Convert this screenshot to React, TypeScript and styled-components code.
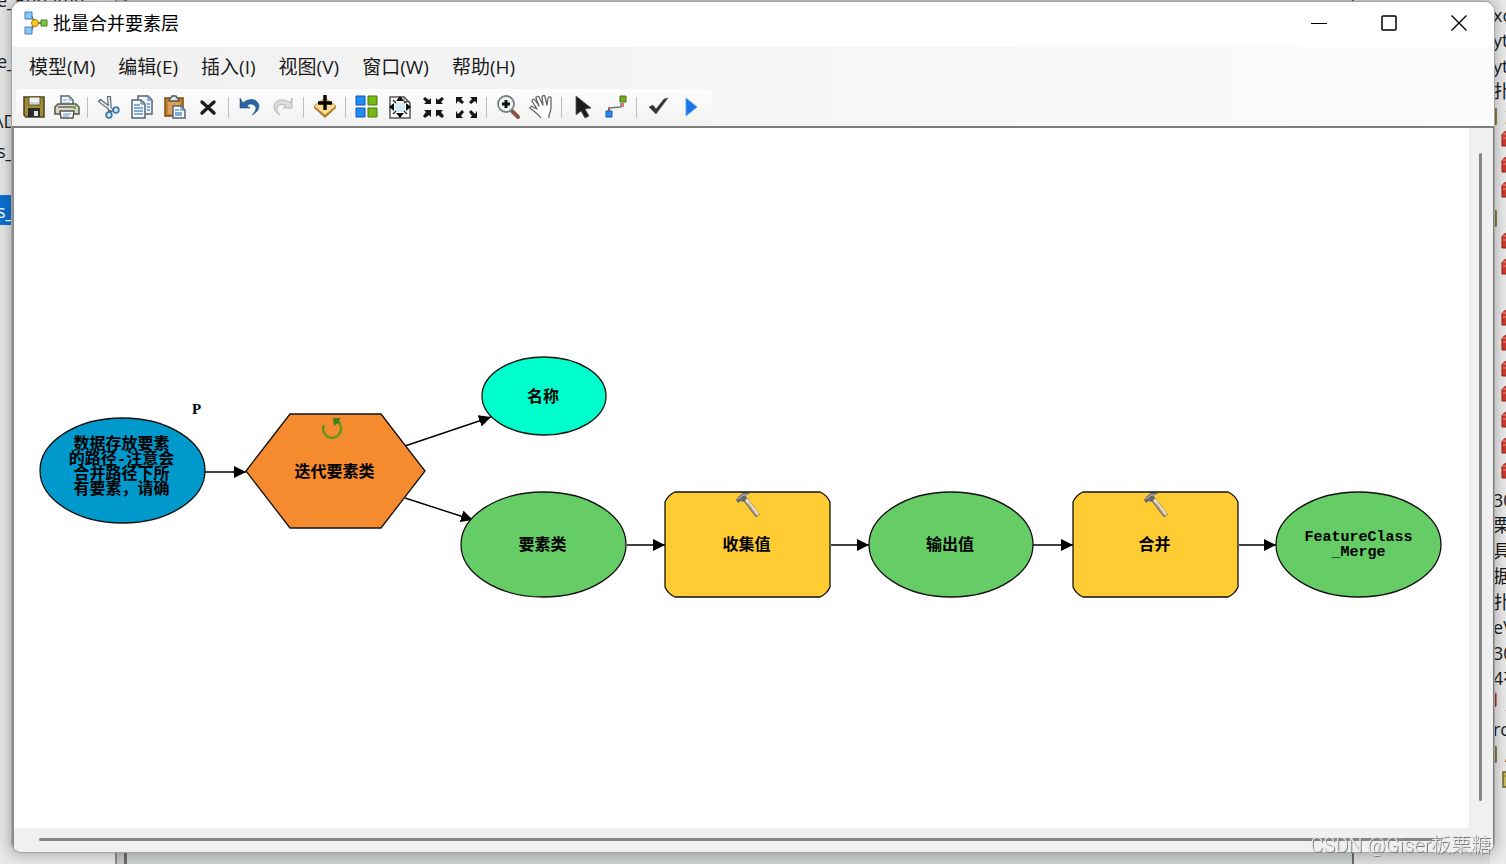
import React from "react";
import styled, { createGlobalStyle } from "styled-components";

const UI_FONT = `"Open Sans", "Noto Sans CJK SC", sans-serif`;

const GlobalStyle = createGlobalStyle`
  * { box-sizing: border-box; }
  body { margin: 0; overflow: hidden; font-family: ${UI_FONT}; color: #1a1a1a; }
  button { font: inherit; color: inherit; border: 0; background: none; padding: 0; margin: 0; }
  ul { list-style: none; margin: 0; padding: 0; }
`;

/* ---------- desktop behind the window ---------- */

const Desktop = styled.div`
  display: grid;
  grid-template-columns: 12px minmax(0, 1fr) 12px;
  grid-template-rows: 2px minmax(0, 1fr) 12px;
  height: 100vh;
  overflow: hidden;
`;

const Backdrop = styled.div`
  grid-area: 1 / 1 / -1 / -1;
  display: flex;
  min-height: 0;
  overflow: hidden;
  background: #cdd1d0;
`;

const FilePane = styled.ul`
  width: 117px;
  flex: none;
  background: #e6e6e6;
  border-right: 2px solid #8a8a90;
  overflow: hidden;
`;

const FileRow = styled.li<{ $selected?: boolean }>`
  height: 30px;
  padding-top: 3px;
  line-height: 27px;
  font-size: 18px;
  text-indent: -3px;
  white-space: nowrap;
  background: ${(p) => (p.$selected ? "#0a72d0" : "transparent")};
  color: ${(p) => (p.$selected ? "#fff" : "#222")};
  &:first-child { height: 15px; padding: 0; line-height: 1px; }
`;

const Splitter = styled.div`
  width: 10px;
  flex: none;
  background: #c4c4c8;
  border-right: 3px solid #6a6a6a;
`;

const MapPane = styled.div`
  flex: 1;
`;

const CatalogPane = styled.div`
  width: 154px;
  flex: none;
  background: #dedede;
  border-left: 2px solid #6a6a6a;
`;

const CatalogList = styled.ul`
  grid-area: 1 / 3 / -1 / 4;
  display: flex;
  flex-direction: column;
  min-height: 0;
  margin-left: -4px;
  padding: 2px 0 71px;
  overflow: hidden;
  background: #eaeaea;
`;

const CatalogRow = styled.li<{ $indent: number }>`
  flex: 1;
  display: flex;
  align-items: center;
  gap: 8px;
  min-height: 0;
  padding-left: ${(p) => p.$indent}px;
  font-size: 18px;
  line-height: 24px;
  white-space: nowrap;
  svg { flex: none; }
`;

type CatalogKind = "text" | "folder" | "data" | "dataEdge" | "folderEdge" | "blank";

const indents: Record<CatalogKind, number> = {
  text: 3, blank: 3, folder: 12, data: 11, dataEdge: 0, folderEdge: 0,
};

const catalog: [CatalogKind, string?][] = [
  ["text", "xc"], ["text", "yth"], ["text", "yth"], ["text", "扑"],
  ["folderEdge", "Z"], ["data"], ["data"], ["data"],
  ["folderEdge", "三"], ["data"], ["data"], ["blank"],
  ["data"], ["data"], ["data"], ["data"], ["data"], ["data"], ["data"],
  ["text", "30"], ["text", "栗"], ["text", "具"], ["text", "据"], ["text", "扑"],
  ["text", "e\\"], ["text", "30"], ["text", "4在"],
  ["dataEdge", "工"], ["text", "rcg"], ["folderEdge", "A"], ["folder"],
];

const DatabaseIcon = ({ width = 14 }: { width?: number }) => (
  <svg width={width} height="24" viewBox={`${14 - width} 0 ${width} 24`} aria-hidden="true">
    <path d="M1 4 5 1h8v13l-4 2H1z" fill="#d0392d" stroke="#8d2119" />
    <path d="M1 4h8l4-3M2 8h7" fill="none" stroke="#e8786c" strokeWidth="1.5" />
  </svg>
);

const FolderIcon = ({ width = 14 }: { width?: number }) => (
  <svg width={width} height="18" viewBox={`${14 - width} 0 ${width} 18`} aria-hidden="true">
    <path d="M1 1h12v15H1z" fill="#c8bb62" stroke="#6d6424" strokeWidth="1.5" />
    <path d="M1 5h9V2" fill="none" stroke="#8a7f38" />
  </svg>
);

/* ---------- window ---------- */

const Window = styled.section`
  grid-area: 2 / 2 / 3 / 3;
  display: flex;
  flex-direction: column;
  min-height: 0;
  z-index: 1;
  overflow: hidden;
  background: #f0f0f0;
  border-radius: 9px;
  box-shadow: 0 0 0 1px #a4a4a4, 0 0 14px 2px rgba(0, 0, 0, 0.28);
`;

const TitleBar = styled.header`
  display: flex;
  align-items: center;
  flex: none;
  height: 45px;
  padding: 0 0 3px 12px;
  background: #fff;
`;

const Title = styled.h1`
  flex: 1;
  margin: 0 0 0 5px;
  font-size: 18px;
  line-height: 24px;
  font-weight: 400;
  color: #000;
`;

const WindowButton = styled.button`
  display: grid;
  place-items: center;
  width: 70px;
  height: 42px;
`;

const CommandArea = styled.div`
  flex: none;
  background: linear-gradient(90deg, #f0f0f0, #fbfbfb);
`;

const MenuBar = styled.nav`
  display: flex;
  align-items: center;
  gap: 23px;
  height: 42px;
  padding: 0 0 2px 17px;
`;

const MenuButton = styled.button`
  font-size: 19px;
  line-height: 24px;
  white-space: nowrap;
`;

const ToolBar = styled.div`
  display: flex;
  align-items: center;
  width: max-content;
  height: 37px;
  margin-left: 4px;
  padding: 0 5px 1px 1px;
  border-radius: 4px;
  background: linear-gradient(#fdfdfd, #f1f1f1);
`;

const ToolButton = styled.button`
  display: grid;
  place-items: center;
  width: 33px;
  height: 34px;
`;

const ToolSeparator = styled.span`
  width: 1px;
  height: 21px;
  margin: 0 4px;
  background: #bdbdbd;
`;

const Workspace = styled.main`
  flex: 1;
  display: grid;
  grid-template-columns: minmax(0, 1fr) 24px;
  grid-template-rows: minmax(0, 1fr) 24px;
  min-height: 0;
  border: solid #7d7d7d;
  border-width: 2px 1px 0 2px;
  border-left-color: #8c8c8c;
`;

const Canvas = styled.div`
  position: relative;
  overflow: hidden;
  background: #fff;
  border-bottom-right-radius: 3px;
`;

const VerticalScroll = styled.div`
  padding: 25px 0 27px 10px;
  &::before { content: ""; display: block; width: 3px; height: 100%; background: #868686; border-radius: 2px; }
`;

const HorizontalScroll = styled.div`
  padding: 10px 27px 0 25px;
  &::before { content: ""; display: block; height: 3px; background: #868686; border-radius: 2px; }
`;

const Watermark = styled.span`
  position: fixed;
  right: 15px;
  bottom: 6px;
  z-index: 2;
  font-family: Roboto, "Noto Sans CJK SC", sans-serif;
  font-size: 20px;
  line-height: 26px;
  font-weight: 300;
  color: #e6e6e6;
  text-shadow: 1px 1px 0 #7c7c7c;
  white-space: nowrap;
`;

/* ---------- diagram ---------- */

const Edges = styled.svg`
  position: absolute;
  inset: 0;
  width: 100%;
  height: 100%;
`;

const NodeBox = styled.div<{ $x: number; $y: number; $w: number; $h: number }>`
  position: absolute;
  left: ${(p) => p.$x}px;
  top: ${(p) => p.$y}px;
  width: ${(p) => p.$w}px;
  height: ${(p) => p.$h}px;
  display: grid;
  place-items: center;
  > * { grid-area: 1 / 1; }
`;

const NodeLabel = styled.span<{ $raised?: boolean }>`
  z-index: 1;
  padding: ${(p) => (p.$raised ? "0 2px 6px 0" : "4px 2px 0 0")};
  font-family: "Liberation Mono", "Noto Sans CJK SC", monospace;
  font-size: 16px;
  line-height: 15px;
  font-weight: 700;
  text-align: center;
  white-space: pre;
  color: #000;
`;

const LatinLabel = styled(NodeLabel)`
  padding: 0;
  font-size: 15px;
`;

const NodeBadge = styled.span`
  z-index: 1;
  align-self: start;
  height: 28px;
`;

const ParameterMark = styled.span`
  position: absolute;
  left: 178px;
  top: 273px;
  font-family: "Liberation Serif", serif;
  font-size: 15px;
  line-height: 17px;
  font-weight: 700;
  color: #000;
`;

type Shape = "ellipse" | "hexagon" | "process";

interface DiagramNode {
  x: number; y: number; w: number; h: number;
  shape: Shape; fill: string; label: string;
  badge?: "loop" | "hammer"; raised?: boolean; latin?: boolean;
}

const nodes: DiagramNode[] = [
  { x: 25, y: 289, w: 167, h: 107, shape: "ellipse", fill: "#0099cc", label: "数据存放要素\n的路径-注意会\n合并路径下所\n有要素，请确", raised: true },
  { x: 231, y: 285, w: 181, h: 116, shape: "hexagon", fill: "#f68a2e", label: "迭代要素类", badge: "loop" },
  { x: 467, y: 228, w: 126, h: 80, shape: "ellipse", fill: "#00ffcc", label: "名称" },
  { x: 446, y: 363, w: 167, h: 107, shape: "ellipse", fill: "#66cc66", label: "要素类" },
  { x: 650, y: 363, w: 167, h: 107, shape: "process", fill: "#ffcc33", label: "收集值", badge: "hammer" },
  { x: 854, y: 363, w: 166, h: 107, shape: "ellipse", fill: "#66cc66", label: "输出值" },
  { x: 1058, y: 363, w: 167, h: 107, shape: "process", fill: "#ffcc33", label: "合并", badge: "hammer" },
  { x: 1261, y: 363, w: 167, h: 107, shape: "ellipse", fill: "#66cc66", label: "FeatureClass\n_Merge", latin: true },
];

const edges: [number, number, number, number][] = [
  [191, 344, 232, 344],
  [391, 318, 477, 289],
  [391, 370, 459, 392],
  [613, 417, 651, 417],
  [817, 417, 855, 417],
  [1019, 417, 1059, 417],
  [1225, 417, 1262, 417],
];

const NodeShape = ({ shape, w, h, fill }: { shape: Shape; w: number; h: number; fill: string }) => {
  const common = { fill, stroke: "#111", strokeWidth: 1.3 };
  return (
    <svg width={w} height={h} aria-hidden="true">
      {shape === "ellipse" && <ellipse cx={w / 2} cy={h / 2} rx={w / 2 - 1} ry={h / 2 - 1} {...common} />}
      {shape === "hexagon" && (
        <polygon points={`1,${h / 2} 45,1 ${w - 45},1 ${w - 1},${h / 2} ${w - 45},${h - 1} 45,${h - 1}`} {...common} />
      )}
      {shape === "process" && (
        <path
          d={`M1 11Q4 4 11 1H${w - 11}Q${w - 4} 4 ${w - 1} 11V${h - 11}Q${w - 4} ${h - 4} ${w - 11} ${h - 1}H11Q4 ${h - 4} 1 ${h - 11}Z`}
          {...common}
        />
      )}
    </svg>
  );
};

const LoopBadge = () => (
  <svg width="28" height="28" viewBox="0 0 28 28" aria-hidden="true">
    <path d="M2 12a9 9 0 1 0 14-3" fill="none" stroke="#5b9a1c" strokeWidth="2.4" />
    <path d="M11 5h8l-2 2 2 4-3-1-4 3z" fill="#3d7f1a" />
  </svg>
);

const HammerBadge = () => (
  <svg width="28" height="28" viewBox="0 0 28 28" aria-hidden="true">
    <path d="M11 8 24 25" stroke="#80735b" strokeWidth="5" />
    <path d="M11 7 24 24" stroke="#e9e2d3" strokeWidth="3" />
    <path d="m14 12 9 12" stroke="#b3a78f" strokeWidth="1" />
    <path d="m2 9 3-4 4-3h7l-4 3 1 3-4 3-2-1-3 2z" fill="#68686c" />
    <path d="m4 8 5-4h5" stroke="#c9c9cd" fill="none" />
  </svg>
);

/* ---------- toolbar icons ---------- */

const Icon = ({ children }: { children: React.ReactNode }) => (
  <svg width="26" height="26" viewBox="0 0 26 26" fill="none" aria-hidden="true">{children}</svg>
);

const SaveIcon = () => (
  <Icon>
    <path d="M3 3h20v20H5l-2-2z" fill="#a08c38" stroke="#4b411a" strokeWidth="1.5" />
    <path d="M8 3h11v8H8z" fill="#f1f3f6" stroke="#5d5222" />
    <path d="M9 9h9" stroke="#a9b3c0" />
    <path d="M7 14h12v9H7z" fill="#2c2c2e" />
    <path d="M13 17h4v5h-4z" fill="#e4e4e4" />
  </Icon>
);

const PrintIcon = () => (
  <Icon>
    <path d="M7 11V2h8l4 4v5" fill="#f7fafd" stroke="#5b6570" strokeWidth="1.5" />
    <path d="M15 2v4h4M9 6h4M9 9h7" stroke="#6fa0cf" />
    <path d="M4 10h18l3 3v7H1v-7z" fill="#d9d8c2" stroke="#55554d" strokeWidth="1.5" />
    <path d="M4 13h18" stroke="#888679" strokeWidth="2" />
    <path d="M6 17h14l-1 7H7z" fill="#fff" stroke="#555" strokeWidth="1.5" />
    <path d="M9 20h8M9 22h6" stroke="#4b8fd2" />
    <path d="M19 14h3" stroke="#63b51d" strokeWidth="2" />
  </Icon>
);

const CutIcon = () => (
  <Icon>
    <path d="m3 6 14 11M13 2l1 16" stroke="#5c6269" strokeWidth="4" />
    <path d="m4 7 12 9M13 3l1 13" stroke="#e6e8ea" strokeWidth="1.8" />
    <circle cx="20" cy="16" r="2.8" fill="#d8ebf6" stroke="#3d7ea9" strokeWidth="1.8" />
    <circle cx="13" cy="21" r="2.8" fill="#d8ebf6" stroke="#3d7ea9" strokeWidth="1.8" />
  </Icon>
);

const CopyIcon = () => (
  <Icon>
    <path d="M9 2h10l4 4v14H9z" fill="#eef4fa" stroke="#59636e" strokeWidth="1.5" />
    <path d="M19 2v4h4M18 10h3M18 13h3M18 16h3" stroke="#5494cc" strokeWidth="1.3" />
    <path d="M3 6h9l4 4v14H3z" fill="#f8fbfe" stroke="#59636e" strokeWidth="1.5" />
    <path d="M12 6v4h4" stroke="#59636e" />
    <path d="M5 11h6M5 14h9M5 17h9M5 20h9" stroke="#5494cc" strokeWidth="1.3" />
  </Icon>
);

const PasteIcon = () => (
  <Icon>
    <path d="M3 4h18v18H3z" fill="#c5802f" stroke="#7d4c16" strokeWidth="1.5" />
    <path d="M6 7h12v13H6z" fill="#dba05a" />
    <path d="M7 7c0-3 2-2 3-5h4c1 3 3 2 3 5z" fill="#e4e7ea" stroke="#555" strokeWidth="1.3" />
    <path d="M11 12h8l4 4v8H11z" fill="#f8fbfe" stroke="#59636e" strokeWidth="1.5" />
    <path d="M19 12v4h4M13 16h4M13 19h7M13 21h7" stroke="#5494cc" strokeWidth="1.3" />
  </Icon>
);

const DeleteIcon = () => (
  <Icon>
    <path d="m7 8 12 11M19 8 7 19" stroke="#1d1d1d" strokeWidth="3.4" strokeLinecap="round" />
  </Icon>
);

const UndoIcon = () => (
  <Icon>
    <path d="M6 9c5-5 15-5 16 3 0 4-3 7-7 9 4-4 5-7 3-9-3-3-7-2-8 0l3 2H3V4z" fill="#2a66a0" stroke="#1d4f83" strokeWidth=".6" />
  </Icon>
);

const RedoIcon = () => (
  <Icon>
    <path d="M20 9C15 4 5 5 4 12c0 4 2 7 6 9-3-4-4-6-2-9 2-2 6-2 8 0l-3 2h9V4z" fill="#dcdcdc" stroke="#b8b8b8" />
  </Icon>
);

const AddDataIcon = () => (
  <Icon>
    <path d="m2 14 11 10 11-10v-2L13 5 2 12z" fill="#a97929" />
    <path d="m2 12 11-8 11 8-11 9z" fill="#ffdc91" stroke="#c79b4b" />
    <path d="M13 1v15M6 9h14" stroke="#000" strokeWidth="3.4" />
  </Icon>
);

const LayoutIcon = () => (
  <Icon>
    <path d="M2 2h9v9H2zM2 14h9v9H2z" fill="#208cf5" stroke="#1257b8" />
    <path d="M14 2h9v9h-9zM14 14h9v9h-9z" fill="#79b916" stroke="#44780b" />
  </Icon>
);

const FullExtentIcon = () => (
  <Icon>
    <path d="M3 3h14l6 6v15H3z" fill="#fff" stroke="#555" strokeWidth="1.5" />
    <path d="M17 3v5h6" stroke="#555" />
    <path d="M8 9h10v9H8z" fill="#d5e9f7" />
    <path d="m13 2 4 5H9zM13 24l4-5H9zM2 13l5-4v8zM24 13l-5-4v8z" fill="#0b0b0b" />
    <path d="m6 6 3 3M20 20l-3-3M20 7l-3 2M6 20l3-3" stroke="#333" strokeWidth="1.5" />
  </Icon>
);

const ShrinkIcon = () => (
  <Icon>
    <path d="M11 10V4L9 6 5 3 3 5l3 3-2 2zM16 10V4l2 2 4-3 2 2-3 3 2 2zM11 16v7l-2-2-4 3-2-2 3-4-2-2zM16 16v7l2-2 4 3 2-2-3-4 2-2z" fill="#161616" />
  </Icon>
);

const ExpandIcon = () => (
  <Icon>
    <path d="M3 3h7L8 5l3 3-2 2-4-3-2 3zM24 3h-7l2 2-3 3 2 2 4-3 2 3zM3 24h7l-2-2 3-4-2-2-4 4-2-3zM24 24h-7l2-2-3-4 2-2 4 4 2-3z" fill="#161616" />
  </Icon>
);

const ZoomIcon = () => (
  <Icon>
    <path d="m17 17 6 6" stroke="#8a5242" strokeWidth="4" strokeLinecap="round" />
    <circle cx="11" cy="10" r="8" fill="#eef3f6" stroke="#7c7f82" strokeWidth="1.8" />
    <path d="M11 6v8M7 10h8" stroke="#111" strokeWidth="3" />
  </Icon>
);

const PanIcon = () => (
  <Icon>
    <path
      d="M13 24c-2-3-4-4-6-6l-5-4c0-2 2-2 3-1l4 2-5-8c0-2 2-2 3-1l4 6-3-8c0-2 2-2 3-1l4 8-1-8c1-2 3-2 3 0l2 8 1-7c1-2 3-1 3 0v9c0 4-1 5-2 8v3"
      fill="#fff" stroke="#676767" strokeWidth="1.3" strokeLinejoin="round"
    />
  </Icon>
);

const PointerIcon = () => (
  <Icon>
    <path d="M6 2v19l5-4 4 7 4-2-4-7 6-1z" fill="#1c1c1e" stroke="#555" strokeWidth=".8" />
  </Icon>
);

const ConnectIcon = () => (
  <Icon>
    <path d="M6 17v-3l12-1V9" stroke="#777" strokeWidth="1.6" />
    <path d="M6 14v3M20 9v4" stroke="#e03030" strokeWidth="1.4" />
    <path d="M3 17h6v6H3z" fill="#238bef" stroke="#1357aa" />
    <path d="M17 2h6v6h-6z" fill="#75ad18" stroke="#44700b" />
  </Icon>
);

const ValidateIcon = () => (
  <Icon>
    <path d="m4 13 4-2 3 4 8-10 4-1-12 16z" fill="#333" stroke="#555" strokeWidth=".6" />
  </Icon>
);

const RunIcon = () => (
  <Icon>
    <path d="M8 4v18l11-9z" fill="#1974e8" stroke="#5da3ee" />
  </Icon>
);

const AppIcon = () => (
  <svg width="24" height="26" viewBox="0 0 24 26" fill="none" aria-hidden="true">
    <path d="m7 5 4 8-4 8M13 13h6" stroke="#4d5a63" strokeWidth="1.5" />
    <path d="M1 2h7v7H1zM1 17h7v7H1z" fill="#8cc7f5" stroke="#3c82bd" />
    <circle cx="11" cy="13" r="3.5" fill="#ffc928" stroke="#a97705" />
    <path d="M17 10h6v6h-6z" fill="#7cc842" stroke="#3e8319" />
  </svg>
);

const menus = ["模型(M)", "编辑(E)", "插入(I)", "视图(V)", "窗口(W)", "帮助(H)"];

const toolGroups: [string, () => React.JSX.Element][][] = [
  [["保存", SaveIcon], ["打印", PrintIcon]],
  [["剪切", CutIcon], ["复制", CopyIcon], ["粘贴", PasteIcon], ["删除", DeleteIcon]],
  [["撤消", UndoIcon], ["恢复", RedoIcon]],
  [["添加数据或工具", AddDataIcon]],
  [["自动布局", LayoutIcon], ["全图", FullExtentIcon], ["固定比例缩小", ShrinkIcon], ["固定比例放大", ExpandIcon]],
  [["放大", ZoomIcon], ["平移", PanIcon]],
  [["选择", PointerIcon], ["连接", ConnectIcon]],
  [["验证整个模型", ValidateIcon], ["运行", RunIcon]],
];

export default function App() {
  return (
    <>
      <GlobalStyle />
      <Desktop>
        <Backdrop>
          <FilePane>
            <FileRow>e_Rename</FileRow>
            <FileRow />
            <FileRow>e_</FileRow>
            <FileRow />
            <FileRow>\D</FileRow>
            <FileRow>s_</FileRow>
            <FileRow />
            <FileRow $selected>s_</FileRow>
          </FilePane>
          <Splitter />
          <MapPane />
          <CatalogPane />
        </Backdrop>

        <CatalogList>
          {catalog.map(([kind, text], i) => (
            <CatalogRow key={i} $indent={indents[kind]}>
              {kind === "data" && <DatabaseIcon />}
              {kind === "dataEdge" && <DatabaseIcon width={7} />}
              {kind === "folder" && <FolderIcon />}
              {kind === "folderEdge" && <FolderIcon width={7} />}
              {text}
            </CatalogRow>
          ))}
        </CatalogList>

        <Window>
          <TitleBar>
            <AppIcon />
            <Title>批量合并要素层</Title>
            <WindowButton aria-label="最小化">
              <svg width="16" height="16" stroke="#000"><path d="M0 8.5h16" /></svg>
            </WindowButton>
            <WindowButton aria-label="最大化">
              <svg width="16" height="16" fill="none" stroke="#000" strokeWidth="1.5"><rect x="1" y="1" width="14" height="14" rx="1" /></svg>
            </WindowButton>
            <WindowButton aria-label="关闭">
              <svg width="16" height="16" stroke="#000" strokeWidth="1.4"><path d="m.5.5 15 15m0-15-15 15" /></svg>
            </WindowButton>
          </TitleBar>

          <CommandArea>
            <MenuBar>
              {menus.map((m) => <MenuButton key={m}>{m}</MenuButton>)}
            </MenuBar>
            <ToolBar role="toolbar">
              {toolGroups.map((group, i) => (
                <React.Fragment key={i}>
                  {i > 0 && <ToolSeparator />}
                  {group.map(([name, Glyph]) => (
                    <ToolButton key={name} aria-label={name}><Glyph /></ToolButton>
                  ))}
                </React.Fragment>
              ))}
            </ToolBar>
          </CommandArea>

          <Workspace>
            <Canvas>
              <Edges aria-hidden="true">
                <defs>
                  <marker id="arrow" markerWidth="12" markerHeight="12" refX="12" refY="6" orient="auto" markerUnits="userSpaceOnUse">
                    <path d="M0 0 12 6 0 12z" fill="#000" />
                  </marker>
                </defs>
                {edges.map(([x1, y1, x2, y2]) => (
                  <line key={`${x1}-${y1}`} x1={x1} y1={y1} x2={x2} y2={y2} stroke="#000" strokeWidth="1.4" markerEnd="url(#arrow)" />
                ))}
              </Edges>
              {nodes.map((n) => (
                <NodeBox key={n.label} $x={n.x} $y={n.y} $w={n.w} $h={n.h}>
                  <NodeShape shape={n.shape} w={n.w} h={n.h} fill={n.fill} />
                  {n.badge && <NodeBadge>{n.badge === "loop" ? <LoopBadge /> : <HammerBadge />}</NodeBadge>}
                  {n.latin ? <LatinLabel>{n.label}</LatinLabel> : <NodeLabel $raised={n.raised}>{n.label}</NodeLabel>}
                </NodeBox>
              ))}
              <ParameterMark>P</ParameterMark>
            </Canvas>
            <VerticalScroll />
            <HorizontalScroll />
          </Workspace>
        </Window>
      </Desktop>
      <Watermark>CSDN @Giser板栗糖</Watermark>
    </>
  );
}
